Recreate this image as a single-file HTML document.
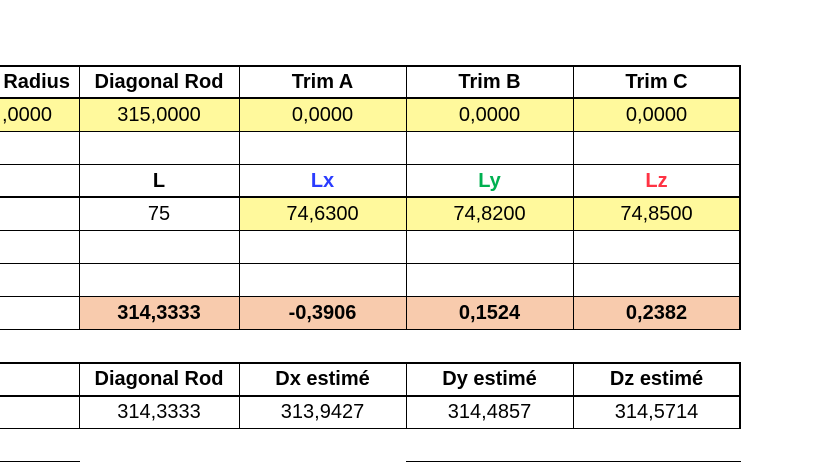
<!DOCTYPE html>
<html><head><meta charset="utf-8"><style>
body{margin:0;width:830px;height:462px;background:#fff;position:relative;overflow:hidden;font-family:"Liberation Sans",Arial,sans-serif;}
.c{position:absolute;display:flex;align-items:center;justify-content:center;font-size:20px;color:#000;box-sizing:border-box;white-space:nowrap}
.b{font-weight:bold}
.h{position:absolute;background:#000;height:1px}
.v{position:absolute;background:#000;width:1px}
.y{background:#FFF99C}
.o{background:#F8CBAD}
</style></head><body>
<div class="c y" style="left:0;top:99px;width:740px;height:32px"></div>
<div class="c y" style="left:239px;top:198px;width:501px;height:32px"></div>
<div class="c o" style="left:79px;top:297px;width:661px;height:32px"></div>

<div class="c b" style="left:-40px;top:66px;width:110px;height:32px;justify-content:flex-end">Radius</div>
<div class="c b" style="left:79px;top:66px;width:160px;height:32px">Diagonal Rod</div>
<div class="c b" style="left:239px;top:66px;width:167px;height:32px">Trim A</div>
<div class="c b" style="left:406px;top:66px;width:167px;height:32px">Trim B</div>
<div class="c b" style="left:573px;top:66px;width:167px;height:32px">Trim C</div>

<div class="c" style="left:-40px;top:99px;width:92px;height:32px;justify-content:flex-end">,0000</div>
<div class="c" style="left:79px;top:99px;width:160px;height:32px">315,0000</div>
<div class="c" style="left:239px;top:99px;width:167px;height:32px">0,0000</div>
<div class="c" style="left:406px;top:99px;width:167px;height:32px">0,0000</div>
<div class="c" style="left:573px;top:99px;width:167px;height:32px">0,0000</div>

<div class="c b" style="left:79px;top:165px;width:160px;height:32px">L</div>
<div class="c b" style="left:239px;top:165px;width:167px;height:32px;color:#2A3CFF">Lx</div>
<div class="c b" style="left:406px;top:165px;width:167px;height:32px;color:#00B050">Ly</div>
<div class="c b" style="left:573px;top:165px;width:167px;height:32px;color:#FF3344">Lz</div>

<div class="c" style="left:79px;top:198px;width:160px;height:32px">75</div>
<div class="c" style="left:239px;top:198px;width:167px;height:32px">74,6300</div>
<div class="c" style="left:406px;top:198px;width:167px;height:32px">74,8200</div>
<div class="c" style="left:573px;top:198px;width:167px;height:32px">74,8500</div>

<div class="c b" style="left:79px;top:297px;width:160px;height:32px">314,3333</div>
<div class="c b" style="left:239px;top:297px;width:167px;height:32px">-0,3906</div>
<div class="c b" style="left:406px;top:297px;width:167px;height:32px">0,1524</div>
<div class="c b" style="left:573px;top:297px;width:167px;height:32px">0,2382</div>

<div class="c b" style="left:79px;top:364px;width:160px;height:31px">Diagonal Rod</div>
<div class="c b" style="left:239px;top:364px;width:167px;height:31px">Dx estimé</div>
<div class="c b" style="left:406px;top:364px;width:167px;height:31px">Dy estimé</div>
<div class="c b" style="left:573px;top:364px;width:167px;height:31px">Dz estimé</div>
<div class="c" style="left:79px;top:396px;width:160px;height:32px">314,3333</div>
<div class="c" style="left:239px;top:396px;width:167px;height:32px">313,9427</div>
<div class="c" style="left:406px;top:396px;width:167px;height:32px">314,4857</div>
<div class="c" style="left:573px;top:396px;width:167px;height:32px">314,5714</div>

<div class="h" style="left:0;top:65px;width:741px;height:2px"></div>
<div class="h" style="left:0;top:97px;width:741px;height:2px"></div>
<div class="h" style="left:0;top:131px;width:741px"></div>
<div class="h" style="left:0;top:164px;width:741px"></div>
<div class="h" style="left:0;top:196px;width:741px;height:2px"></div>
<div class="h" style="left:0;top:230px;width:741px"></div>
<div class="h" style="left:0;top:263px;width:741px"></div>
<div class="h" style="left:0;top:296px;width:741px"></div>
<div class="h" style="left:0;top:329px;width:741px"></div>
<div class="v" style="left:79px;top:65px;height:265px"></div>
<div class="v" style="left:239px;top:65px;height:265px"></div>
<div class="v" style="left:406px;top:65px;height:265px"></div>
<div class="v" style="left:573px;top:65px;height:265px"></div>
<div class="v" style="left:739px;top:65px;height:265px;width:2px"></div>

<div class="h" style="left:0;top:362px;width:741px;height:2px"></div>
<div class="h" style="left:0;top:395px;width:741px;height:2px"></div>
<div class="h" style="left:0;top:428px;width:741px"></div>
<div class="v" style="left:79px;top:362px;height:67px"></div>
<div class="v" style="left:239px;top:362px;height:67px"></div>
<div class="v" style="left:406px;top:362px;height:67px"></div>
<div class="v" style="left:573px;top:362px;height:67px"></div>
<div class="v" style="left:739px;top:362px;height:67px;width:2px"></div>

<div class="h" style="left:0;top:461px;width:80px"></div>
<div class="h" style="left:406px;top:461px;width:335px"></div>
</body></html>
